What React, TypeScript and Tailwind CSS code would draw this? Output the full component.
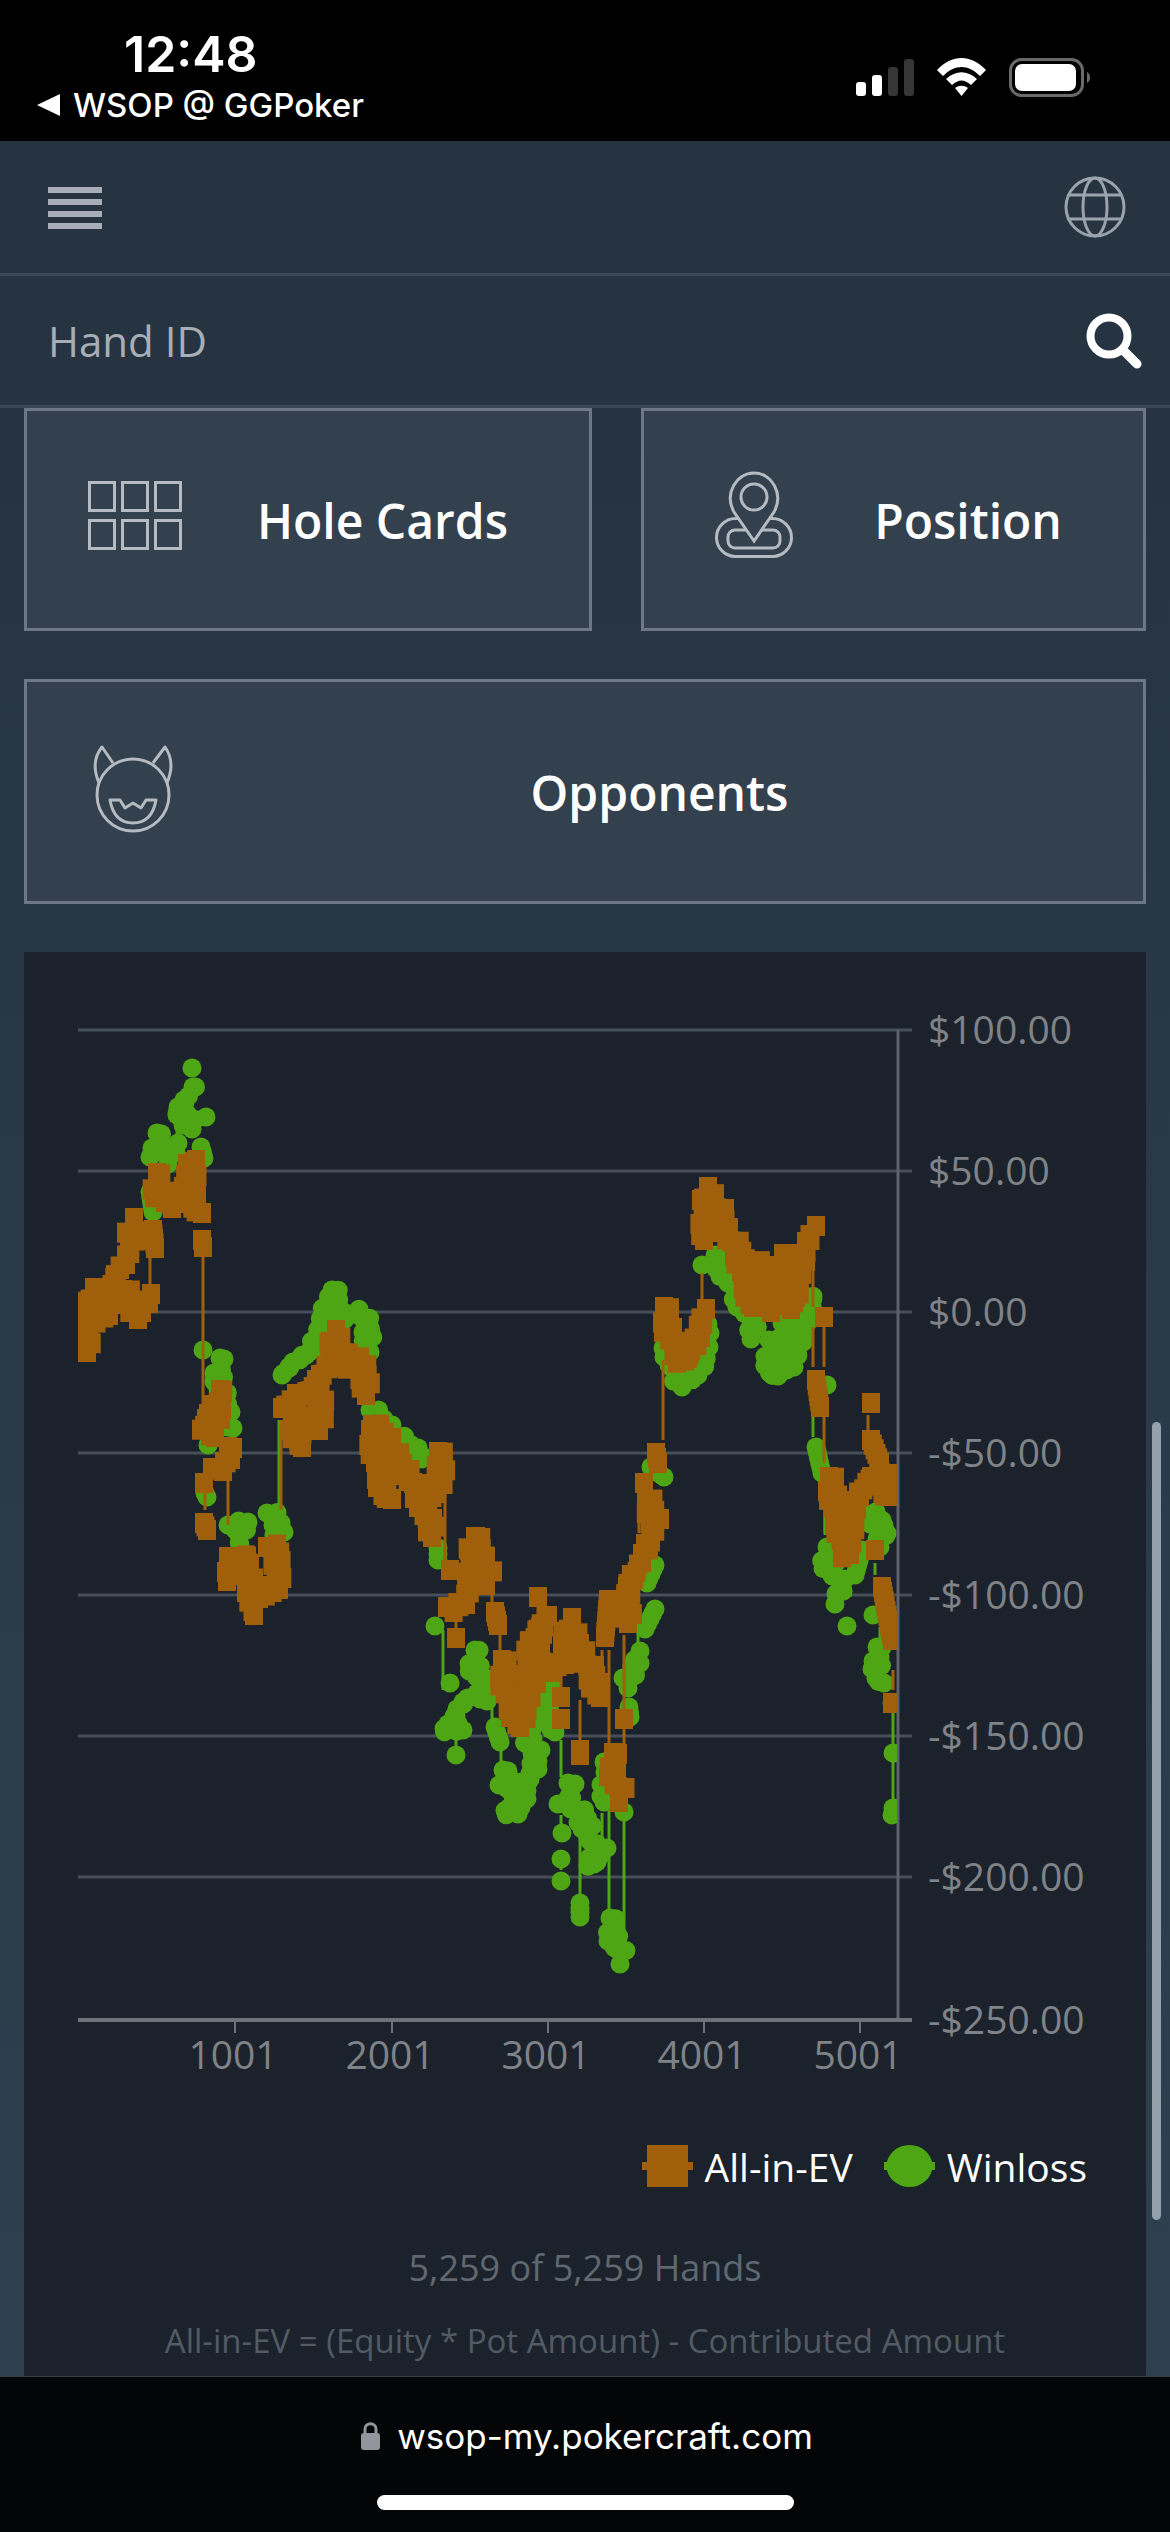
import React from "react";

type P = number[][];
const BROWN = "#a0600b";
const GREEN = "#4ea614";

const evClusters: P[] = [
  [[87,1352],[86,1333],[85,1317],[90,1293],[98,1317],[105,1320],[112,1293],[115,1273],[123,1267],[133,1240],[130,1223]],
  [[123,1290],[140,1317],[148,1297]],
  [[153,1230],[155,1248]],
  [[157,1173],[155,1190],[167,1200],[173,1207],[182,1195],[192,1160],[193,1200],[197,1217]],
  [[202,1240],[203,1247]],
  [[220,1390],[213,1410],[223,1417],[203,1422],[215,1437]],
  [[228,1447],[228,1467],[212,1468],[208,1478]],
  [[204,1523],[207,1530]],
  [[228,1557],[232,1577],[243,1555],[250,1587],[255,1603],[254,1615]],
  [[267,1547],[277,1550],[278,1577],[276,1592],[255,1590]],
  [[282,1408],[293,1397],[295,1430],[302,1447]],
  [[305,1395],[313,1383],[320,1400],[321,1428]],
  [[320,1375],[330,1367],[333,1333],[348,1367],[360,1360],[368,1393]],
  [[370,1430],[377,1460],[382,1483],[387,1503]],
  [[372,1425],[388,1443],[400,1467],[413,1483],[423,1503],[428,1523],[437,1533]],
  [[438,1452],[443,1480],[432,1500]],
  [[450,1570]],
  [[456,1638]],
  [[447,1607],[463,1607],[470,1583],[473,1540],[472,1553]],
  [[475,1537],[480,1557],[490,1580]],
  [[495,1612],[498,1625]],
  [[502,1660],[505,1687],[515,1713],[520,1727],[532,1687],[527,1650],[543,1620],[533,1667],[562,1667],[568,1623],[577,1647],[590,1670],[600,1697]],
  [[538,1597]],
  [[561,1697]],
  [[561,1719]],
  [[580,1750],[580,1755]],
  [[608,1600],[605,1637]],
  [[613,1753],[613,1777],[623,1797]],
  [[624,1719]],
  [[628,1623],[627,1587],[638,1567],[650,1540],[655,1523],[648,1500]],
  [[644,1483]],
  [[656,1453],[658,1463]],
  [[664,1307],[669,1333],[684,1363],[698,1340],[701,1313]],
  [[704,1240],[705,1190],[720,1213],[725,1233],[738,1250],[753,1307],[756,1260],[773,1310],[780,1257],[793,1307],[802,1260],[811,1230]],
  [[824,1317]],
  [[816,1380],[820,1407]],
  [[829,1477],[836,1510],[847,1557],[855,1500],[871,1477],[885,1477],[884,1500]],
  [[871,1403]],
  [[871,1440],[880,1463]],
  [[875,1550]],
  [[882,1587],[892,1640]],
  [[892,1703]],
];

const wlClusters: P[] = [
  [[192,1068]],
  [[193,1087],[183,1103],[177,1115],[197,1125],[202,1122]],
  [[157,1133],[155,1153],[173,1147],[173,1160]],
  [[201,1147],[204,1158]],
  [[150,1192],[153,1212]],
  [[203,1350]],
  [[220,1358],[218,1368],[220,1387],[227,1417],[228,1432]],
  [[208,1445]],
  [[205,1493],[207,1497]],
  [[228,1525],[245,1525],[240,1545]],
  [[267,1513],[277,1520],[280,1537]],
  [[282,1375],[290,1365],[310,1353],[315,1342],[332,1290],[337,1307],[330,1320],[360,1313],[367,1327],[370,1352]],
  [[370,1410],[388,1430],[407,1447],[425,1462]],
  [[438,1548],[438,1560]],
  [[435,1626]],
  [[450,1683]],
  [[475,1650],[472,1663],[483,1683],[492,1697],[467,1697],[457,1713],[445,1727],[463,1730]],
  [[456,1755]],
  [[495,1727],[500,1742]],
  [[503,1770],[503,1780],[517,1787],[507,1810],[520,1812],[527,1780],[533,1773],[537,1755],[528,1743],[530,1722]],
  [[540,1667],[548,1690],[543,1705],[555,1732]],
  [[568,1783],[572,1793],[563,1800],[577,1810],[587,1825],[590,1837],[593,1853],[593,1867],[602,1852]],
  [[562,1833]],
  [[561,1859]],
  [[561,1881]],
  [[580,1903],[580,1917]],
  [[604,1802],[607,1770],[608,1757]],
  [[610,1918],[613,1937],[618,1950],[624,1959]],
  [[624,1812]],
  [[630,1717],[629,1707]],
  [[623,1678],[632,1683],[635,1655],[638,1672]],
  [[647,1583],[655,1565]],
  [[645,1629],[655,1609]],
  [[651,1467],[664,1477]],
  [[665,1333],[673,1373],[687,1383],[698,1375],[705,1357],[705,1327]],
  [[702,1265]],
  [[715,1255],[735,1290],[751,1320],[756,1335]],
  [[769,1340],[769,1357],[773,1380]],
  [[782,1323],[791,1370],[804,1327],[811,1297],[805,1310]],
  [[827,1385]],
  [[816,1447],[822,1473]],
  [[827,1547],[825,1560],[840,1583],[840,1600]],
  [[847,1626]],
  [[855,1575],[862,1550]],
  [[877,1525],[885,1543],[871,1510]],
  [[873,1615]],
  [[877,1647],[877,1665],[879,1687]],
  [[892,1703]],
  [[893,1753]],
  [[893,1808],[892,1815]],
];

const evStems: P = [
  [150,1250,1290],[203,1250,1425],[205,1480,1510],[228,1470,1525],[281,1420,1510],[445,1490,1560],
  [492,1590,1605],[500,1630,1650],[456,1620,1630],[538,1605,1615],[561,1670,1690],[580,1700,1740],
  [602,1650,1680],[609,1650,1750],[624,1635,1780],[627,1600,1610],[663,1360,1440],[702,1273,1303],
  [813,1257,1307],[813,1327,1367],[824,1327,1367],[824,1417,1463],[868,1415,1430],[639,1503,1533],
  [651,1503,1513],[893,1670,1690],
];
const wlStems: P = [
  [177,1123,1140],[204,1167,1203],[279,1420,1510],[443,1630,1690],[456,1733,1750],[492,1703,1720],
  [501,1750,1765],[525,1757,1777],[561,1740,1777],[561,1815,1830],[561,1850,1870],[580,1833,1900],
  [609,1810,1913],[602,1813,1843],[624,1817,1935],[638,1600,1650],[825,1500,1535],[850,1580,1597],
  [893,1713,1808],[875,1563,1575],[880,1627,1647],[813,1417,1437],[825,1500,1533],
];

const jx = [0, 5, -4, 3, -5, 4, -2];
const jy = [0, -4, 5, -3, 4, -5, 2];

function dense(c: P): P {
  const out: P = [];
  c.forEach((p, i) => {
    if (i === 0) { out.push(p); return; }
    const q = c[i - 1];
    const d = Math.hypot(p[0] - q[0], p[1] - q[1]);
    const n = Math.max(1, Math.round(d / 5));
    for (let k = 1; k <= n; k++) out.push([q[0] + ((p[0] - q[0]) * k) / n, q[1] + ((p[1] - q[1]) * k) / n]);
  });
  if (c.length < 3) return out;
  return out.map((p, j) => [p[0] + jx[j % 7], p[1] + jy[j % 7]]);
}

const grid = [1030, 1171, 1312, 1453, 1595, 1736, 1877];
const labels: [string, number][] = [
  ["$100.00", 1030], ["$50.00", 1171], ["$0.00", 1312], ["-$50.00", 1453],
  ["-$100.00", 1595], ["-$150.00", 1736], ["-$200.00", 1877], ["-$250.00", 2020],
];
const xTicks: [string, number][] = [["1001", 235], ["2001", 392], ["3001", 548], ["4001", 704], ["5001", 860]];

function Chart() {
  return (
    <svg className="block w-[1122px] h-[1170px]" viewBox="24 952 1122 1170">
      <defs>
        <clipPath id="plot"><rect x="78" y="1000" width="819" height="1020" /></clipPath>
      </defs>
      {grid.map((y) => <rect key={y} x="78" y={y - 1.5} width="834" height="3" fill="#464e58" />)}
      <rect x="896.5" y="1030" width="3" height="990" fill="#5c636e" />
      <rect x="78" y="2018" width="834" height="4" fill="#6d7277" />
      {xTicks.map(([t, x]) => <rect key={t} x={x - 1} y="2020" width="2" height="13" fill="#6d7277" />)}
      <g clipPath="url(#plot)">
        {wlStems.map((s, i) => <rect key={i} x={s[0] - 1.5} y={s[1]} width="3" height={s[2] - s[1]} fill={GREEN} />)}
        {wlClusters.map((c, i) => (
          <g key={i} fill={GREEN}>
            {dense(c).map((p, j) => <circle key={j} cx={p[0]} cy={p[1]} r="9.5" />)}
          </g>
        ))}
        {evStems.map((s, i) => <rect key={i} x={s[0] - 1.5} y={s[1]} width="3" height={s[2] - s[1]} fill={BROWN} />)}
        {evClusters.map((c, i) => (
          <g key={i} fill={BROWN}>
            {dense(c).map((p, j) => <rect key={j} x={p[0] - 9} y={p[1] - 10} width="18" height="20" />)}
          </g>
        ))}
      </g>
      <g fill="#7f8387" fontSize="39">
        {labels.map(([t, y]) => <text key={t} x="928" y={y + 14}>{t}</text>)}
        {xTicks.map(([t, x]) => <text key={t} x={x - 2} y="2069" textAnchor="middle">{t}</text>)}
      </g>
    </svg>
  );
}

function HoleIcon() {
  const xs = [88.5, 121.5, 154.5];
  const ys = [482.5, 520.5];
  return (
    <svg className="w-[96px] h-[72px] shrink-0" viewBox="86 480 96 72" fill="none" stroke="#b5bbc1" strokeWidth="3">
      {ys.map((y) => xs.map((x) => <rect key={`${x}-${y}`} x={x} y={y} width="25" height="28" />))}
    </svg>
  );
}

function PositionIcon() {
  return (
    <svg className="w-[82px] h-[94px] shrink-0" viewBox="711 466 82 94" fill="none" stroke="#b5bbc1" strokeWidth="3">
      <rect x="714.5" y="518.5" width="75" height="38" rx="19" />
      <rect x="726" y="530" width="52" height="18" rx="7" />
      <path d="M752 541 L732 512 C722 494 734 473 752 473 C770 473 782 494 772 512 Z" fill="#33404e" />
      <circle cx="752" cy="497" r="13" />
    </svg>
  );
}

function OpponentIcon() {
  return (
    <svg className="w-[84px] h-[92px] shrink-0" viewBox="91 744 84 92" fill="none" stroke="#b5bbc1" strokeWidth="3" strokeLinejoin="round">
      <circle cx="133" cy="796" r="36" />
      <path d="M99 784 C93 770 94 758 102 748 L113 764" />
      <path d="M167 784 C173 770 172 758 165 748 L153 764" />
      <path d="M110 801 H120 L125 809 L133 804 L141 809 L146 801 H156 Q152 824 133 824 Q114 824 110 801 Z" />
    </svg>
  );
}

function Card({ icon, label, className, pad }: { icon: React.ReactNode; label: string; className: string; pad: string }) {
  return (
    <div className={`flex items-center border-[3px] border-[#6c7885] bg-[#33404e] ${className}`}>
      <div className={`flex w-[147px] shrink-0 items-center ${pad}`}>{icon}</div>
      <div className="flex-1 pl-[2px] pt-[2px] text-center text-[48px] font-semibold leading-none text-white">{label}</div>
    </div>
  );
}

export default function App() {
  return (
    <div className="flex h-[2532px] w-[1170px] flex-col overflow-hidden bg-black font-['Open_Sans',sans-serif]">
      <div className="relative h-[141px] shrink-0 bg-black">
        <div className="pl-[124px] pt-[26px] font-['Inter',sans-serif] text-[50px] font-semibold leading-[56px] text-white">12:48</div>
        <div className="flex items-center pl-[37px] pt-[3px] font-['Inter',sans-serif] text-[33px] font-medium leading-[40px] text-white">
          <svg className="mr-[12px] h-[22px] w-[24px]" viewBox="0 0 24 22"><path d="M23 0V22L0 11Z" fill="#fff" /></svg>
          WSOP @ GGPoker
        </div>
        <svg className="absolute left-[850px] top-[50px] h-[56px] w-[250px]" viewBox="850 50 250 56">
          <rect x="856" y="82" width="10" height="14" rx="3" fill="#fff" />
          <rect x="872" y="75" width="10" height="21" rx="3" fill="#fff" />
          <rect x="888" y="67" width="10" height="29" rx="3" fill="#363636" />
          <rect x="904" y="59" width="10" height="37" rx="3" fill="#363636" />
          <path d="M937 70 C952 54 971 54 986 70 L980 76 C968 64 955 64 943 76 Z" fill="#fff" />
          <path d="M946 79 C956 70 967 70 977 79 L971 85 C964 79 959 79 952 85 Z" fill="#fff" />
          <path d="M955 88 C959 85 964 85 968 88 L961.5 96 Z" fill="#fff" />
          <rect x="1010.5" y="59.5" width="72" height="36" rx="11" fill="none" stroke="#6a6a6a" strokeWidth="3" />
          <rect x="1015" y="64" width="61" height="27" rx="7" fill="#fff" />
          <path d="M1087 72 C1091 74 1091 81 1087 83 Z" fill="#6a6a6a" />
        </svg>
      </div>

      <div className="flex h-[135px] shrink-0 items-center justify-between border-b-[3px] border-[#3a4856] bg-[#263442] pl-[48px] pr-[44px]">
        <div className="flex w-[54px] flex-col gap-[6px] pt-[2px]">
          <div className="h-[6px] bg-[#a8aeb7]" />
          <div className="h-[6px] bg-[#a8aeb7]" />
          <div className="h-[6px] bg-[#a8aeb7]" />
          <div className="h-[6px] bg-[#a8aeb7]" />
        </div>
        <svg className="h-[62px] w-[62px]" viewBox="0 0 62 62" fill="none" stroke="#9aa2ab" strokeWidth="3">
          <circle cx="31" cy="31" r="29" />
          <ellipse cx="31" cy="31" rx="12" ry="29" />
          <path d="M5 19 H57 M5 43 H57" />
        </svg>
      </div>

      <div className="flex h-[132px] shrink-0 items-center justify-between border-b-[3px] border-[#3a4856] bg-[#263442] pl-[48px] pr-[27px]">
        <span className="text-[42px] font-normal leading-none text-[#a8aeb5]">Hand ID</span>
        <svg className="h-[58px] w-[58px]" viewBox="0 0 58 58" fill="none" stroke="#fff">
          <circle cx="24" cy="24" r="18.5" strokeWidth="8" />
          <path d="M38 38 L52 52" strokeWidth="9" strokeLinecap="round" />
        </svg>
      </div>

      <div className="relative min-h-0 flex-1 overflow-hidden bg-linear-to-b from-[#263442] to-[#2e404f] px-[24px]">
        <div className="flex h-[223px] gap-[49px]">
          <Card className="w-[568px]" pad="pl-[60px] pb-[8px]" icon={<HoleIcon />} label="Hole Cards" />
          <Card className="flex-1" pad="pl-[69px] pb-[13px]" icon={<PositionIcon />} label="Position" />
        </div>
        <Card className="mt-[48px] h-[225px]" pad="pl-[64px] pb-[6px]" icon={<OpponentIcon />} label="Opponents" />
        <div className="mt-[48px] h-[1500px] bg-[#1b222c]">
          <Chart />
          <div className="mt-[23px] flex h-[42px] items-center justify-end pr-[59px] text-[39px] leading-none text-white">
            <svg className="mr-[12px] h-[42px] w-[51px]" viewBox="0 0 51 42">
              <rect x="0" y="17" width="51" height="8" fill={BROWN} />
              <rect x="5" y="0" width="41" height="42" fill={BROWN} />
            </svg>
            <span>All-in-EV</span>
            <svg className="ml-[31px] mr-[12px] h-[42px] w-[51px]" viewBox="0 0 51 42">
              <rect x="0" y="17" width="51" height="8" fill={GREEN} />
              <ellipse cx="25.5" cy="21" rx="23" ry="21" fill={GREEN} />
            </svg>
            <span>Winloss</span>
          </div>
          <div className="mt-[58px] text-center text-[36px] leading-[46px] text-[#5f6871]">5,259 of 5,259 Hands</div>
          <div className="mt-[29px] text-center text-[33px] leading-[42px] text-[#525b64]">All-in-EV = (Equity * Pot Amount) - Contributed Amount</div>
        </div>
        <div className="absolute left-[1152px] top-[1014px] h-[798px] w-[9px] rounded-full bg-[#94a0ac]" />
      </div>

      <div className="relative h-[156px] shrink-0 border-t-[1px] border-[#3a3f44] bg-[#040507]">
        <div className="flex h-[118px] items-center justify-center gap-[17px] pl-[4px] font-['Inter',sans-serif] text-[35px] leading-none text-white">
          <svg className="h-[28px] w-[19px]" viewBox="0 0 19 28">
            <path d="M4 12 V7 C4 0 15 0 15 7 V12" fill="none" stroke="#92959b" strokeWidth="3" />
            <rect x="0" y="11" width="19" height="17" rx="3" fill="#92959b" />
          </svg>
          <span>wsop-my.pokercraft.com</span>
        </div>
        <div className="mx-auto h-[15px] w-[417px] rounded-full bg-white" />
      </div>
    </div>
  );
}
